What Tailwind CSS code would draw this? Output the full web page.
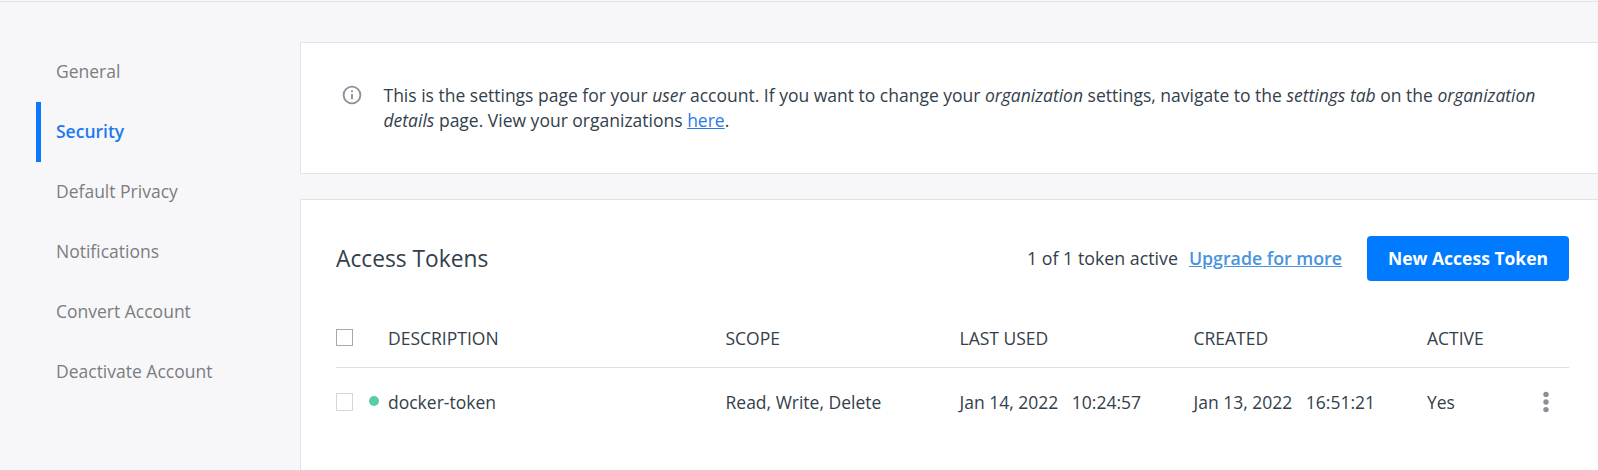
<!DOCTYPE html>
<html lang="en">
<head>
<meta charset="utf-8">
<title>Account Settings</title>
<script src="https://cdn.jsdelivr.net/npm/@tailwindcss/browser@4"></script>
</head>
<body class="h-[470px] w-[1598px] overflow-hidden bg-[#f7f7fa] pt-px font-['Open_Sans',sans-serif] text-[17.5px] text-[#33404b]">
<div class="flex h-full border-t border-[#e1e2e6]">
  <nav class="w-[300px] shrink-0 pt-10 pl-9 text-[#7b7d80]">
    <a class="flex h-15 items-center pb-0.5 pl-5">General</a>
    <a class="flex h-15 items-center border-l-5 border-[#0a78ff] pb-0.5 pl-[15px] font-semibold text-[#1f7af0]">Security</a>
    <a class="flex h-15 items-center pb-0.5 pl-5">Default Privacy</a>
    <a class="flex h-15 items-center pb-0.5 pl-5">Notifications</a>
    <a class="flex h-15 items-center pb-0.5 pl-5">Convert Account</a>
    <a class="flex h-15 items-center pb-0.5 pl-5">Deactivate Account</a>
  </nav>
  <main class="flex min-w-0 flex-1 flex-col gap-[25px] pt-10">
    <section class="flex h-[132px] shrink-0 rounded-l-xs border border-r-0 border-[#e1e2e6] bg-white pt-10 pl-[41px]">
      <svg class="mt-[1.5px] size-[20px] shrink-0" viewBox="0 0 20 20" fill="none" stroke="#8b939c" stroke-width="1.9"><circle cx="10" cy="10" r="8.4"/><path d="M10 8.9v5.4M10 5.2v2"/></svg>
      <p class="ml-[21.5px] leading-[25px] whitespace-nowrap">This is the settings page for your <i>user</i> account. If you want to change your <i>organization</i> settings, navigate to the <i>settings tab</i> on the <i>organization</i><br><i>details</i> page. View your organizations <a class="text-[#2a79ea] underline">here</a>.</p>
    </section>
    <section class="flex-1 rounded-tl-xs border-t border-l border-[#e1e2e6] bg-white pt-9 pr-[29px] pl-[35px]">
      <div class="flex h-[45px] items-center">
        <h1 class="text-[22.75px] leading-[34px]">Access Tokens</h1>
        <span class="ml-auto text-[17.8px]">1 of 1 token active</span>
        <a class="ml-[11px] text-[17.75px] font-semibold text-[#4a93de] underline">Upgrade for more</a>
        <button class="ml-[25px] h-[45px] w-[202px] rounded bg-[#007bff] font-bold text-white">New Access Token</button>
      </div>
      <div class="mt-[28px] grid h-[59px] grid-cols-[52px_337.5px_234px_234px_233.5px_1fr] items-center border-b border-[#dfe0e3]">
        <span class="mb-0.5 size-[17px] border border-[#a5a8ad]"></span>
        <span>DESCRIPTION</span><span>SCOPE</span><span>LAST USED</span><span>CREATED</span><span>ACTIVE</span>
      </div>
      <div class="grid h-[69px] grid-cols-[33px_19px_337.5px_234px_234px_233.5px_1fr] items-center">
        <span class="mb-0.5 h-[18px] w-[17px] border border-[#d6d7da]"></span>
        <span class="mb-[3px] size-[10px] rounded-full bg-[#58cbaa]"></span>
        <span>docker-token</span><span>Read, Write, Delete</span>
        <span class="flex gap-[13.5px]"><span>Jan 14, 2022</span><span>10:24:57</span></span>
        <span class="flex gap-[13.5px]"><span>Jan 13, 2022</span><span>16:51:21</span></span>
        <span class="flex items-center justify-between pr-5">Yes<svg class="mb-0.5 h-[22px] w-[6px]" viewBox="0 0 6 22" fill="#8b8f96"><circle cx="3" cy="3.4" r="2.7"/><circle cx="3" cy="11" r="2.7"/><circle cx="3" cy="18.6" r="2.7"/></svg></span>
      </div>
    </section>
  </main>
</div>
</body>
</html>
